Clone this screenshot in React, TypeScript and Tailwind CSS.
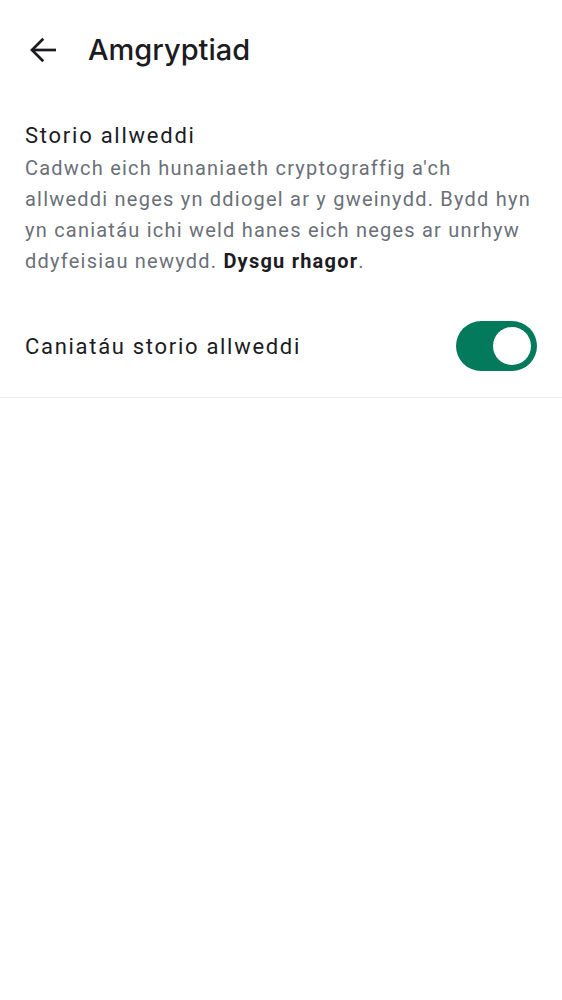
import React from "react";

export default function App() {
  return (
    <div className="w-[562px] h-[1000px] bg-white" style={{ fontFamily: "Roboto, sans-serif" }}>
      <div className="flex items-center h-[100px] pl-[26px]">
        <svg width="36" height="36" viewBox="0 0 24 24" fill="none" stroke="#1c1b1f" strokeWidth="1.8">
          <path d="M20 12H5" />
          <path d="M11.5 4.5L4 12l7.5 7.5" strokeLinejoin="miter" />
        </svg>
        <div className="ml-[26px] text-[29px] text-[#1c1b1f] font-medium" style={{ fontFamily: "Inter, sans-serif" }}>
          Amgryptiad
        </div>
      </div>
      <div className="px-[25px] pt-[20px]">
        <div className="text-[22px] leading-[32px] tracking-[1.75px] text-[#1c1b1f]">Storio allweddi</div>
        <div className="text-[20px] leading-[31px] tracking-[1.22px] text-[#6b7078] mt-[1px]">
          Cadwch eich hunaniaeth cryptograffig a'ch allweddi neges yn ddiogel ar y gweinydd. Bydd hyn yn caniatáu ichi weld hanes eich neges ar unrhyw ddyfeisiau newydd.{" "}
          <span className="font-bold text-[#1c1b1f]">Dysgu rhagor</span>.
        </div>
      </div>
      <div className="mt-[21px] flex items-center justify-between px-[25px] h-[100px] pb-[3px] border-b border-[#ececec]">
        <div className="text-[22px] tracking-[1.7px] text-[#1c1b1f]">Caniatáu storio allweddi</div>
        <div className="w-[81px] h-[50px] rounded-full bg-[#047a5d] flex items-center justify-end pr-[6px]">
          <div className="w-[38px] h-[38px] rounded-full bg-white" />
        </div>
      </div>
    </div>
  );
}
